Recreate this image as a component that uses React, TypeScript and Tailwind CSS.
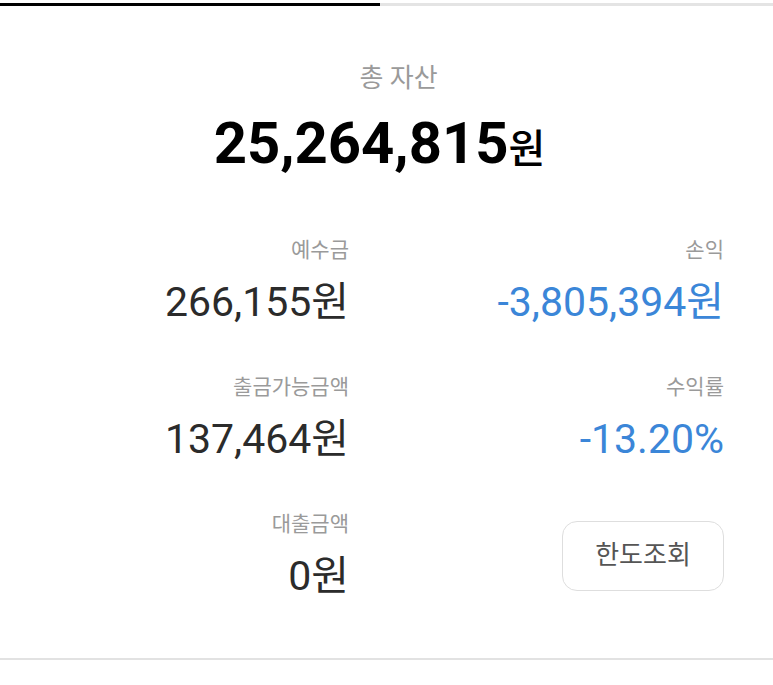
import React from 'react';

const font = { fontFamily: 'Roboto, "Noto Sans CJK KR", sans-serif' };

const Item = ({ label, value, unit, blue }: { label: string; value: string; unit?: string; blue?: boolean }) => (
  <div className="flex flex-col items-end">
    <span className="text-[21px] leading-[26px] text-[#9a9a9a]">{label}</span>
    <span className={`mt-[15px] text-[41px] leading-[48px] ${blue ? 'text-[#3b86d8]' : 'text-[#2b2b2b]'}`}>
      {value}
      {unit}
    </span>
  </div>
);

export default function App() {
  return (
    <div className="w-[773px] h-[685px] bg-white overflow-hidden" style={font}>
      {/* progress */}
      <div className="flex h-[3px] mt-[3px]">
        <div className="w-[380px] bg-black" />
        <div className="flex-1 bg-[#e4e4e4]" />
      </div>

      <div className="flex flex-col items-center pt-[57px]">
        <span className="pl-[24px] text-[26px] leading-[30px] text-[#9a9a9a]">총 자산</span>
        <div className="mt-[18px] pr-[14px] flex items-baseline h-[64px] text-black">
          <span className="text-[58px] leading-[64px] font-bold">25,264,815</span>
          <span className="text-[40px] leading-[40px] font-medium">원</span>
        </div>
      </div>

      <div className="grid grid-cols-2 gap-x-[28px] gap-y-[48px] pl-[2px] pr-[49px] mt-[62px]">
        <Item label="예수금" value="266,155" unit="원" />
        <Item label="손익" value="-3,805,394" unit="원" blue />
        <Item label="출금가능금액" value="137,464" unit="원" />
        <Item label="수익률" value="-13.20%" blue />
        <Item label="대출금액" value="0" unit="원" />
        <div className="flex justify-end items-center">
          <button className="w-[162px] h-[70px] rounded-[15px] border border-[#dedede] bg-white text-[26px] text-[#555555]">
            한도조회
          </button>
        </div>
      </div>

      <div className="mt-[58px] h-[2px] bg-[#e2e2e2]" />
    </div>
  );
}
